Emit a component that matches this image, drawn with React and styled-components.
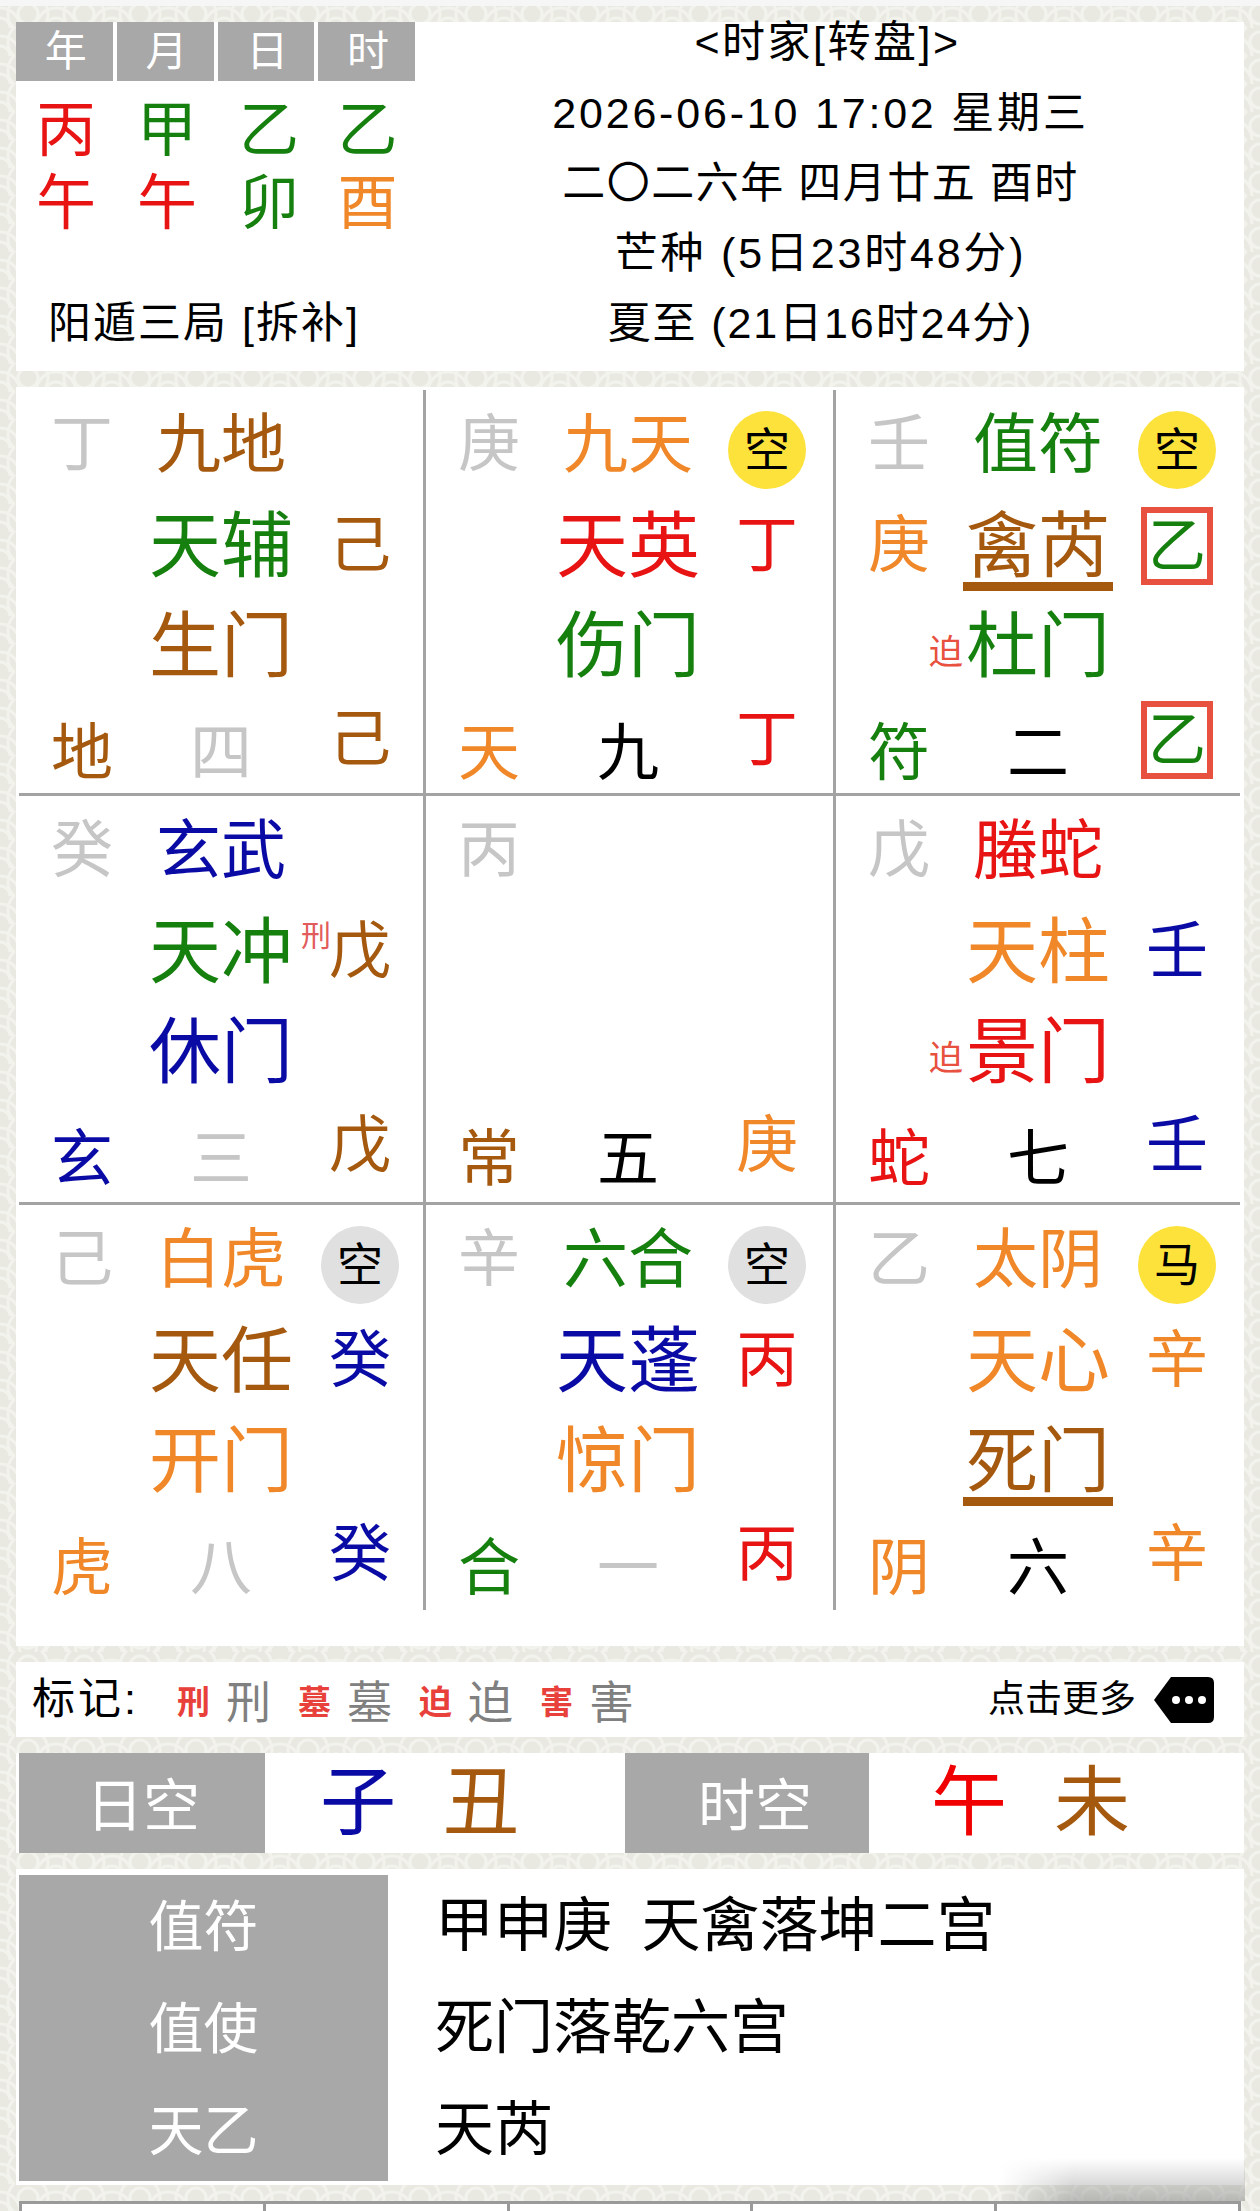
import React from 'react';
import styled, { createGlobalStyle } from 'styled-components';

const RED = '#e81414';
const GREEN = '#16800f';
const ORANGE = '#f0882a';
const BROWN = '#a5590f';
const BLUE = '#0a0aa5';
const GRAY = '#c6c6c6';
const BLACK = '#000';

const wave = encodeURIComponent(
  `<svg xmlns="http://www.w3.org/2000/svg" width="56" height="28" viewBox="0 0 56 28"><g fill="none" stroke="#f3f3ee" stroke-width="3"><circle cx="0" cy="28" r="10"/><circle cx="0" cy="28" r="20"/><circle cx="56" cy="28" r="10"/><circle cx="56" cy="28" r="20"/><circle cx="28" cy="14" r="10"/><circle cx="28" cy="14" r="20"/></g></svg>`
);

const GlobalStyle = createGlobalStyle`
  html, body {
    margin: 0;
    padding: 0;
    background: #fff;
  }
  * {
    box-sizing: border-box;
  }
`;

const cells = [
  {
    stem: '丁', god: { t: '九地', c: BROWN },
    star: { t: '天辅', c: GREEN }, starStem: { t: '己', c: BROWN },
    door: { t: '生门', c: BROWN },
    low: { t: '地', c: BROWN }, num: { t: '四', c: GRAY }, lowStem: { t: '己', c: BROWN },
  },
  {
    stem: '庚', god: { t: '九天', c: ORANGE }, badge: { t: '空', c: 'yellow' },
    star: { t: '天英', c: RED }, starStem: { t: '丁', c: RED },
    door: { t: '伤门', c: GREEN },
    low: { t: '天', c: ORANGE }, num: { t: '九', c: BLACK }, lowStem: { t: '丁', c: RED },
  },
  {
    stem: '壬', god: { t: '值符', c: GREEN }, badge: { t: '空', c: 'yellow' },
    mid: { t: '庚', c: ORANGE },
    star: { t: '禽芮', c: BROWN, line: true }, starStem: { t: '乙', c: GREEN, box: true },
    door: { t: '杜门', c: GREEN, mark: '迫' },
    low: { t: '符', c: GREEN }, num: { t: '二', c: BLACK }, lowStem: { t: '乙', c: GREEN, box: true },
  },
  {
    stem: '癸', god: { t: '玄武', c: BLUE },
    star: { t: '天冲', c: GREEN }, starStem: { t: '戊', c: BROWN, mark: '刑' },
    door: { t: '休门', c: BLUE },
    low: { t: '玄', c: BLUE }, num: { t: '三', c: GRAY }, lowStem: { t: '戊', c: BROWN },
  },
  {
    stem: '丙',
    low: { t: '常', c: BROWN }, num: { t: '五', c: BLACK }, lowStem: { t: '庚', c: ORANGE },
  },
  {
    stem: '戊', god: { t: '螣蛇', c: RED },
    star: { t: '天柱', c: ORANGE }, starStem: { t: '壬', c: BLUE },
    door: { t: '景门', c: RED, mark: '迫' },
    low: { t: '蛇', c: RED }, num: { t: '七', c: BLACK }, lowStem: { t: '壬', c: BLUE },
  },
  {
    stem: '己', god: { t: '白虎', c: ORANGE }, badge: { t: '空', c: 'gray' },
    star: { t: '天任', c: BROWN }, starStem: { t: '癸', c: BLUE },
    door: { t: '开门', c: ORANGE },
    low: { t: '虎', c: ORANGE }, num: { t: '八', c: GRAY }, lowStem: { t: '癸', c: BLUE },
  },
  {
    stem: '辛', god: { t: '六合', c: GREEN }, badge: { t: '空', c: 'gray' },
    star: { t: '天蓬', c: BLUE }, starStem: { t: '丙', c: RED },
    door: { t: '惊门', c: ORANGE },
    low: { t: '合', c: GREEN }, num: { t: '一', c: GRAY }, lowStem: { t: '丙', c: RED },
  },
  {
    stem: '乙', god: { t: '太阴', c: ORANGE }, badge: { t: '马', c: 'yellow' },
    star: { t: '天心', c: ORANGE }, starStem: { t: '辛', c: ORANGE },
    door: { t: '死门', c: BROWN, line: true },
    low: { t: '阴', c: ORANGE }, num: { t: '六', c: BLACK }, lowStem: { t: '辛', c: ORANGE },
  },
];

const pillars = [
  { t: '丙', c: RED }, { t: '甲', c: GREEN }, { t: '乙', c: GREEN }, { t: '乙', c: GREEN },
  { t: '午', c: RED }, { t: '午', c: RED }, { t: '卯', c: GREEN }, { t: '酉', c: ORANGE },
];

const legend = ['刑', '墓', '迫', '害'];

const StemText = ({ item, low }) => {
  if (!item) return <span />;
  if (item.box) return <BoxStem $color={item.c} $low={low}>{item.t}</BoxStem>;
  return (
    <Stem $color={item.c} $low={low}>
      {item.mark && <StemMark>{item.mark}</StemMark>}
      {item.t}
    </Stem>
  );
};

const Palace = ({ cell, index }) => {
  const { stem, god, badge, mid, star, starStem, door, low, num, lowStem } = cell;
  return (
    <Cell $right={index % 3 !== 2} $bottom={index < 6}>
      <Stem $color={GRAY}>{stem}</Stem>
      <God $color={god && god.c}>{god && god.t}</God>
      {badge ? <Badge $kind={badge.c}>{badge.t}</Badge> : <span />}

      {mid ? <Stem $color={mid.c}>{mid.t}</Stem> : <span />}
      {star ? <Big $color={star.c} $line={star.line}>{star.t}</Big> : <span />}
      <StemText item={starStem} />

      <span />
      {door ? (
        <Big $color={door.c} $line={door.line}>
          {door.mark && <DoorMark>{door.mark}</DoorMark>}
          {door.t}
        </Big>
      ) : <span />}
      <span />

      <LowLeft $color={low.c}>{low.t}</LowLeft>
      <LowLeft $color={num.c}>{num.t}</LowLeft>
      <StemText item={lowStem} low />
    </Cell>
  );
};

const App = () => (
  <Page>
    <GlobalStyle />
    <TopStrip />
    <TopPanel>
      <LeftInfo>
        <Tabs>
          {['年', '月', '日', '时'].map((t) => <Tab key={t}>{t}</Tab>)}
        </Tabs>
        <Pillars>
          {pillars.map((p, i) => <Pillar key={i} $color={p.c}>{p.t}</Pillar>)}
        </Pillars>
        <JuText>阳遁三局 [拆补]</JuText>
      </LeftInfo>
      <DateInfo>
        <DateTitle>&lt;时家[转盘]&gt;</DateTitle>
        <DateLine $spacing={2.8}>2026-06-10 17:02 星期三</DateLine>
        <DateLine $spacing={1.5}>二〇二六年 四月廿五 酉时</DateLine>
        <DateLine $spacing={2.8}>芒种 (5日23时48分)</DateLine>
        <DateLine $spacing={1.9}>夏至 (21日16时24分)</DateLine>
      </DateInfo>
    </TopPanel>

    <BoardPanel>
      <Board>
        {cells.map((cell, i) => <Palace key={i} cell={cell} index={i} />)}
      </Board>
    </BoardPanel>

    <LegendPanel>
      <LegendTitle>标记:</LegendTitle>
      {legend.map((t) => (
        <LegendPair key={t}>
          <LegendRed>{t}</LegendRed>
          <LegendGray>{t}</LegendGray>
        </LegendPair>
      ))}
      <MoreLink>
        点击更多
        <svg width="60" height="46" viewBox="0 0 60 46">
          <path d="M0 23 L17 0 H54 Q60 0 60 6 V40 Q60 46 54 46 H17 Z" fill="#000" />
          <circle cx="22" cy="23" r="4" fill="#fff" />
          <circle cx="35" cy="23" r="4" fill="#fff" />
          <circle cx="48" cy="23" r="4" fill="#fff" />
        </svg>
      </MoreLink>
    </LegendPanel>

    <VoidPanel>
      <VoidLabel $width={246} $shift={2}>日空</VoidLabel>
      <VoidValues $width={360} $pad={55}>
        <VoidChar $color={BLUE}>子</VoidChar>
        <VoidChar $color={BROWN}>丑</VoidChar>
      </VoidValues>
      <VoidLabel $width={244} $shift={16}>时空</VoidLabel>
      <VoidValues $pad={62}>
        <VoidChar $color="#f00000">午</VoidChar>
        <VoidChar $color={BROWN}>未</VoidChar>
      </VoidValues>
    </VoidPanel>

    <InfoPanel>
      <InfoTable>
        <InfoLabel>值符</InfoLabel>
        <InfoText>甲申庚{'\u2002'}天禽落坤二宫</InfoText>
        <InfoLabel>值使</InfoLabel>
        <InfoText>死门落乾六宫</InfoText>
        <InfoLabel>天乙</InfoLabel>
        <InfoText>天芮</InfoText>
      </InfoTable>
    </InfoPanel>

    <BottomRow>
      {[0, 1, 2, 3, 4].map((i) => <BottomCell key={i} />)}
    </BottomRow>
    <Watermark />
  </Page>
);

const Page = styled.div`
  position: relative;
  width: 1260px;
  height: 2211px;
  overflow: hidden;
  display: flex;
  flex-direction: column;
  gap: 16px;
  padding: 0 16px;
  background-color: #e9e9e2;
  background-image: url("data:image/svg+xml,${wave}");
  font-family: "Liberation Sans", "Noto Sans CJK SC", sans-serif;
  color: #000;

  & > * {
    flex: none;
  }
`;

const TopStrip = styled.div`
  height: 6px;
  margin: 0 -16px;
  background: #f6f6f6;
`;

const TopPanel = styled.section`
  display: flex;
  height: 349px;
  background: #fff;
`;

const LeftInfo = styled.div`
  width: 399px;
  flex: none;
`;

const Tabs = styled.div`
  display: grid;
  grid-template-columns: repeat(4, 1fr);
  gap: 4px;
  height: 59px;
`;

const Tab = styled.div`
  display: flex;
  align-items: center;
  justify-content: center;
  padding-left: 3px;
  background: #a8a8a8;
  color: #fff;
  font-size: 42px;
  line-height: 1;
`;

const Pillars = styled.div`
  display: grid;
  grid-template-columns: 100px 102px 102px 95px;
  grid-auto-rows: 73px;
  margin-top: 13px;
`;

const Pillar = styled.div`
  display: flex;
  align-items: center;
  justify-content: center;
  color: ${(p) => p.$color};
  font-size: 60px;
  line-height: 1;
`;

const JuText = styled.div`
  margin-top: 53px;
  padding-left: 32px;
  font-size: 43px;
  letter-spacing: 2px;
  line-height: 60px;
  white-space: nowrap;
`;

const DateInfo = styled.div`
  flex: 1;
  padding-right: 18px;
  display: flex;
  flex-direction: column;
  align-items: center;
`;

const DateTitle = styled.div`
  height: 40px;
  margin: 0 0 16px 14px;
  font-size: 43px;
  letter-spacing: 2.5px;
  line-height: 40px;
`;

const DateLine = styled.div`
  height: 70px;
  font-size: 43px;
  letter-spacing: ${(p) => p.$spacing}px;
  line-height: 70px;
  white-space: nowrap;
`;

const BoardPanel = styled.section`
  height: 1259px;
  padding: 3px 3px 0;
  background: #fff;
`;

const Board = styled.div`
  display: grid;
  grid-template-columns: 407px 410px 404px;
  grid-template-rows: 406px 409px 405px;
`;

const Cell = styled.div`
  display: grid;
  grid-template-columns: 126px 152px 126px;
  grid-template-rows: 110px 92px 108px 96px;
  align-items: center;
  justify-items: center;
  ${(p) => p.$right && 'border-right: 3px solid #a3a3a3;'}
  ${(p) => p.$bottom && 'border-bottom: 3px solid #a3a3a3;'}
`;

const Stem = styled.div`
  position: relative;
  color: ${(p) => p.$color};
  font-size: 62px;
  line-height: 72px;
  margin-bottom: ${(p) => (p.$low ? '16px' : '0')};
`;

const BoxStem = styled.div`
  display: flex;
  align-items: center;
  justify-content: center;
  width: 72px;
  height: 78px;
  border: 6px solid #e8503f;
  color: ${(p) => p.$color};
  font-size: 58px;
  line-height: 1;
  margin-bottom: ${(p) => (p.$low ? '16px' : '0')};
`;

const StemMark = styled.span`
  position: absolute;
  right: 100%;
  top: 3px;
  margin-right: -2px;
  color: #e25c5c;
  font-size: 30px;
  line-height: 34px;
`;

const God = styled.div`
  color: ${(p) => p.$color};
  font-size: 65px;
  line-height: 72px;
  white-space: nowrap;
`;

const Big = styled.div`
  position: relative;
  padding: 0 3px;
  color: ${(p) => p.$color};
  font-size: 72px;
  line-height: 72px;
  white-space: nowrap;
  ${(p) => p.$line && `box-shadow: 0 9px 0 ${p.$color};`}
`;

const DoorMark = styled.span`
  position: absolute;
  right: 100%;
  top: 50%;
  margin-top: -12px;
  color: #e8503f;
  font-size: 34px;
  line-height: 36px;
`;

const Badge = styled.div`
  display: flex;
  align-items: center;
  justify-content: center;
  width: 78px;
  height: 78px;
  border-radius: 50%;
  margin-top: 10px;
  background: ${(p) => (p.$kind === 'yellow' ? '#fde23c' : '#e0e0e0')};
  font-size: 46px;
  line-height: 1;
`;

const LowLeft = styled.div`
  color: ${(p) => p.$color};
  font-size: 62px;
  line-height: 72px;
  margin-top: 12px;
`;

const LegendPanel = styled.section`
  display: flex;
  align-items: center;
  height: 75px;
  padding: 0 30px 0 16px;
  background: #fff;
`;

const LegendTitle = styled.div`
  width: 145px;
  flex: none;
  font-size: 43px;
  letter-spacing: 3px;
  line-height: 1;
`;

const LegendPair = styled.div`
  display: flex;
  align-items: center;
  gap: 16px;
  width: 121px;
  flex: none;
`;

const LegendRed = styled.span`
  color: #e8403a;
  font-size: 33px;
  font-weight: 700;
`;

const LegendGray = styled.span`
  color: #808080;
  font-size: 45px;
`;

const MoreLink = styled.div`
  display: flex;
  align-items: center;
  gap: 18px;
  margin-left: auto;
  font-size: 37px;
  line-height: 1;
`;

const VoidPanel = styled.section`
  display: flex;
  height: 100px;
  padding-left: 3px;
  background: #fff;
`;

const VoidLabel = styled.div`
  display: flex;
  align-items: center;
  justify-content: center;
  width: ${(p) => p.$width}px;
  flex: none;
  padding: 0 0 4px ${(p) => p.$shift}px;
  background: #a8a8a8;
  color: #fff;
  font-size: 57px;
`;

const VoidValues = styled.div`
  display: flex;
  align-items: center;
  gap: 47px;
  ${(p) => p.$width && `width: ${p.$width}px;`}
  padding-left: ${(p) => p.$pad}px;
`;

const VoidChar = styled.span`
  color: ${(p) => p.$color};
  font-size: 76px;
  line-height: 1;
`;

const InfoPanel = styled.section`
  height: 316px;
  padding: 6px 3px 0;
  background: #fff;
`;

const InfoTable = styled.div`
  display: grid;
  grid-template-columns: 369px 1fr;
  grid-auto-rows: 102px;
`;

const InfoLabel = styled.div`
  display: flex;
  align-items: center;
  justify-content: center;
  padding-top: 3px;
  background: #a8a8a8;
  color: #fff;
  font-size: 55px;
  line-height: 1;
`;

const InfoText = styled.div`
  display: flex;
  align-items: center;
  padding-left: 47px;
  font-size: 59px;
  line-height: 1;
  white-space: pre;
`;

const BottomRow = styled.div`
  display: grid;
  grid-template-columns: repeat(5, 1fr);
  height: 40px;
  margin: 0 3px;
  border-top: 3px solid #9a9a9a;
  border-left: 3px solid #9a9a9a;
  background: #fff;
`;

const BottomCell = styled.div`
  border-right: 3px solid #9a9a9a;
`;

const Watermark = styled.div`
  position: absolute;
  left: 1000px;
  top: 2158px;
  width: 245px;
  height: 43px;
  background: linear-gradient(to bottom, rgba(150, 150, 150, 0), rgba(150, 150, 150, 0.6));
  mask-image: linear-gradient(to right, transparent, #000 30%);
`;

export default App;
